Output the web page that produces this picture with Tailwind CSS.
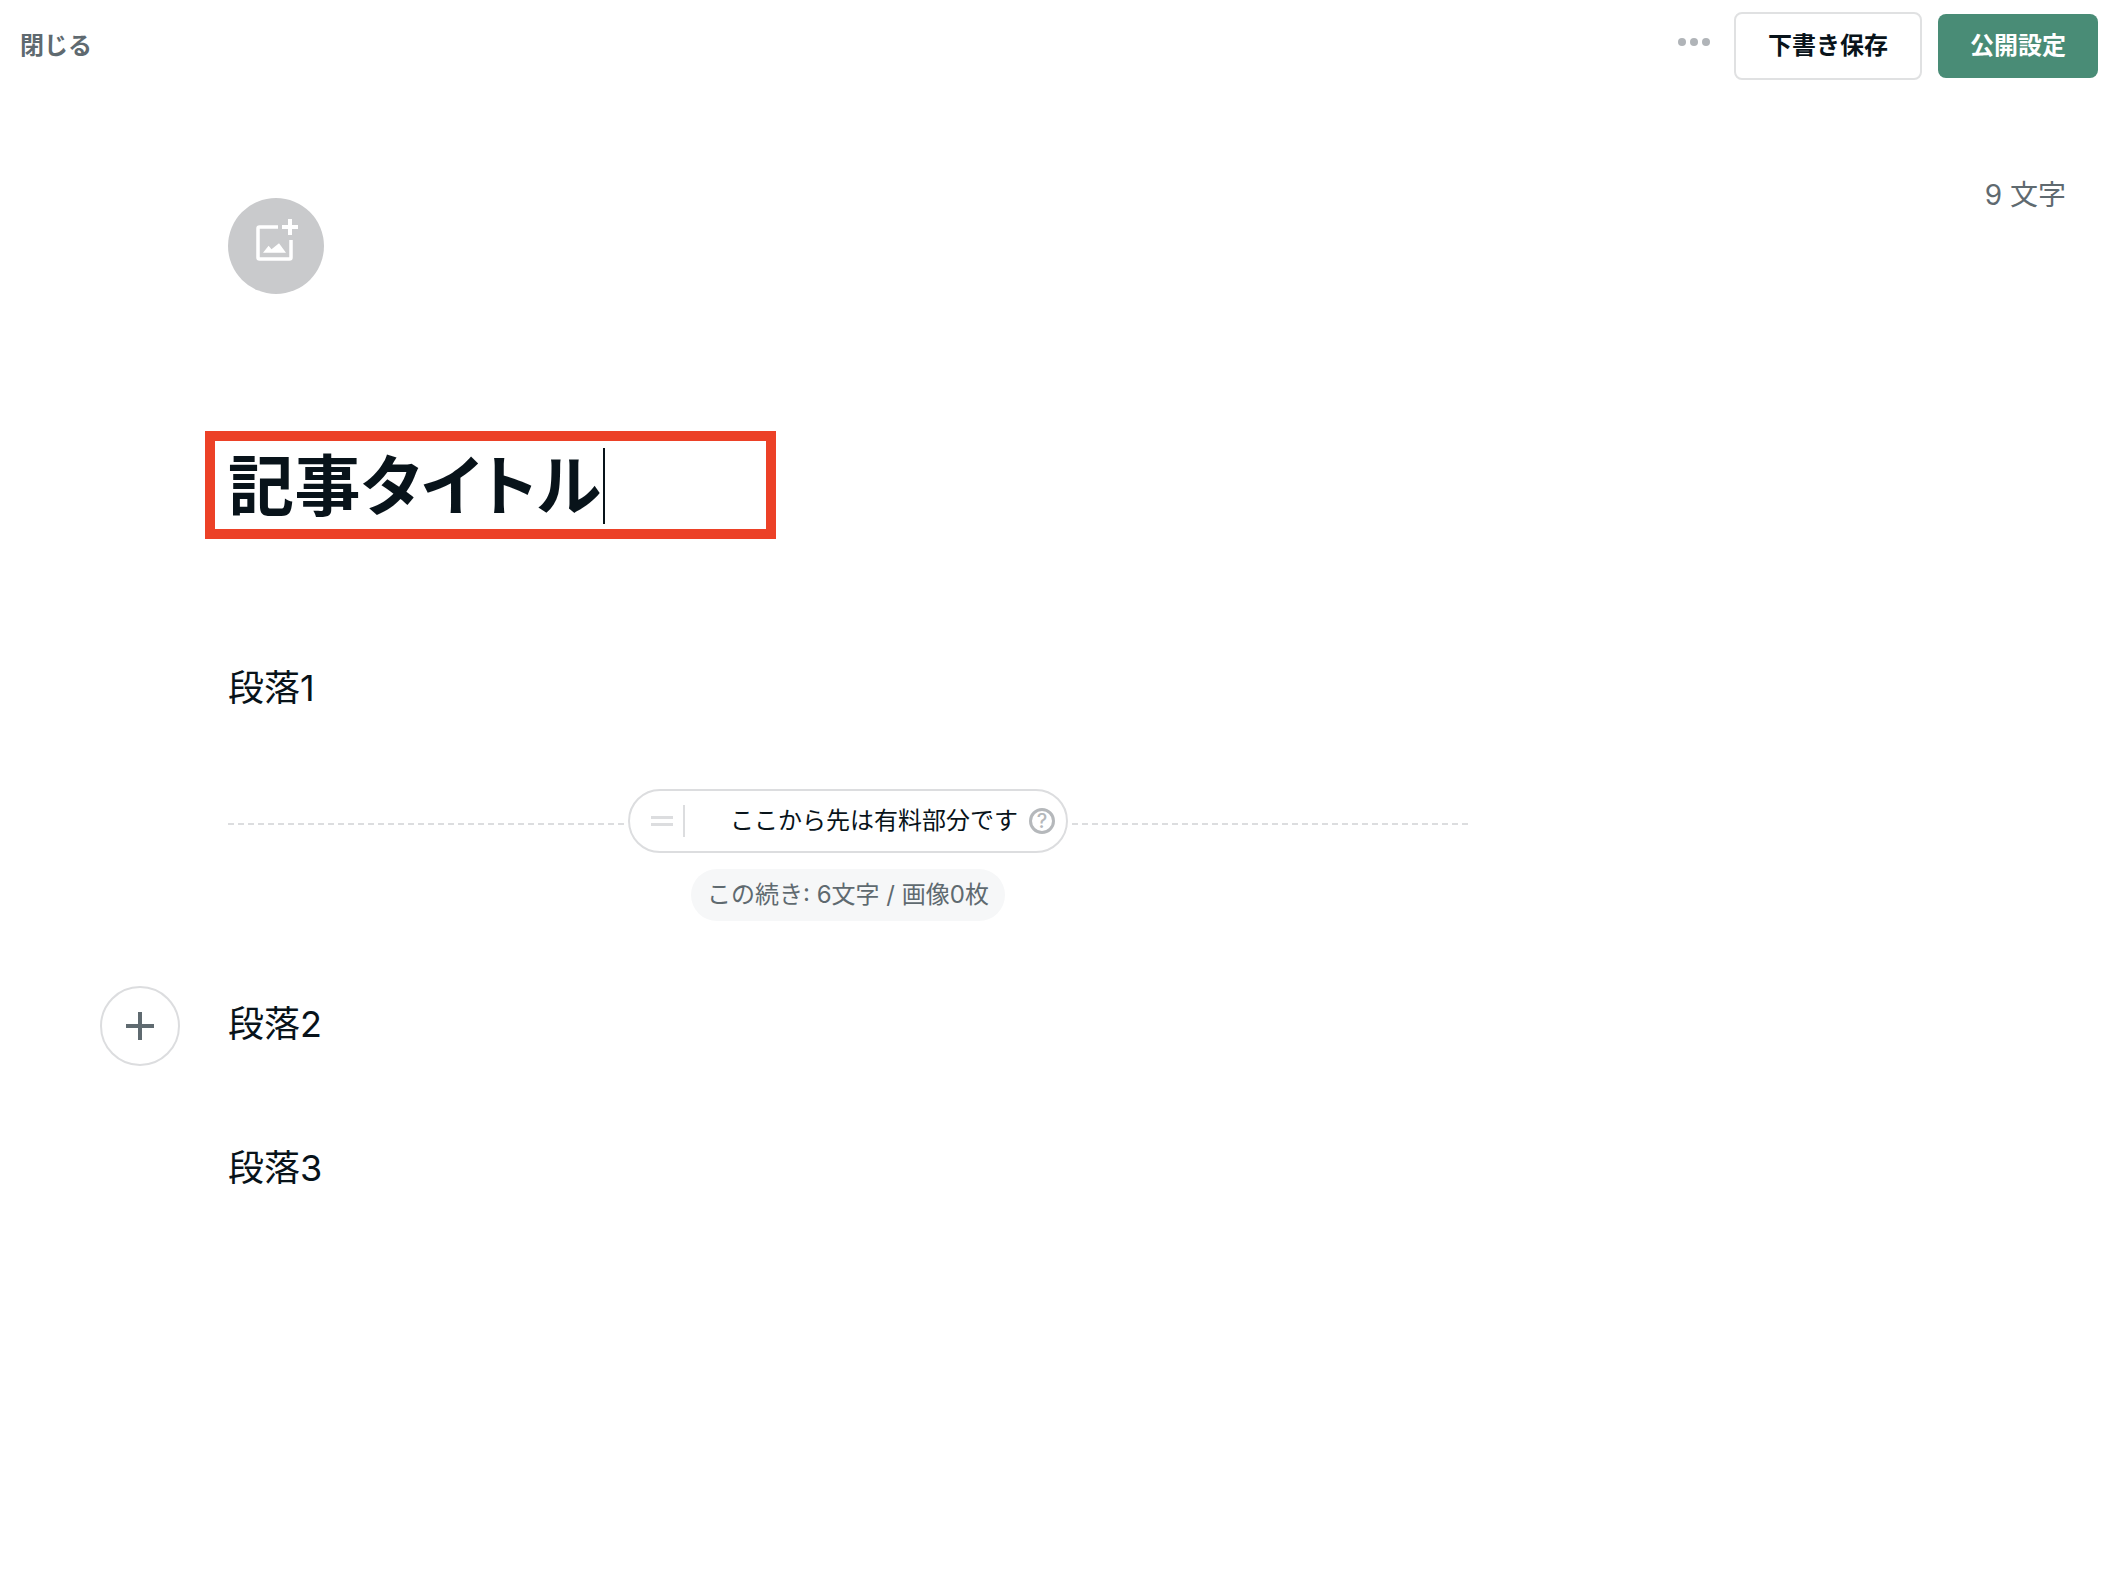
<!DOCTYPE html>
<html lang="ja">
<head>
<meta charset="utf-8">
<script src="https://cdn.jsdelivr.net/npm/@tailwindcss/browser@4"></script>
</head>
<body class="bg-white">
<div class="relative w-[2112px] h-[1576px] overflow-hidden bg-white text-[#08131a] font-['Inter','Noto_Sans_CJK_JP',sans-serif]">
  <header class="flex items-center h-[92px] pl-[20px] pr-[14px]">
    <span class="text-[24px] font-bold text-[#5f6a70]">閉じる</span>
    <div class="ml-auto flex items-center">
      <div class="flex gap-[4px] mr-[24px] mb-[8px]">
        <span class="w-[8px] h-[8px] rounded-full bg-[#b0b4b8]"></span>
        <span class="w-[8px] h-[8px] rounded-full bg-[#b0b4b8]"></span>
        <span class="w-[8px] h-[8px] rounded-full bg-[#b0b4b8]"></span>
      </div>
      <button class="w-[188px] h-[68px] rounded-[8px] border-2 border-[#e0e1e2] bg-white text-[24px] font-bold text-[#08131a]">下書き保存</button>
      <button class="ml-[16px] w-[160px] h-[64px] rounded-[8px] bg-[#498c76] text-[24px] font-bold text-white">公開設定</button>
    </div>
  </header>

  <div class="flex justify-end pr-[46px] pt-[82px] h-[82px]">
    <span class="text-[28px] leading-[42px] text-[#5f6a70] h-[42px] whitespace-nowrap">9 文字</span>
  </div>

  <main class="pl-[228px] w-[1468px]">
    <div class="pt-[24px]">
      <div class="flex items-center justify-center w-[96px] h-[96px] rounded-full bg-[#c9cacc]">
        <svg class="ml-[2px] mb-[12px]" width="42" height="42" viewBox="0 0 42 42" fill="none">
          <path d="M22 8H3.500A1.500 1.500 0 0 0 2 9.500V38.500A1.500 1.500 0 0 0 3.500 40H33.500A1.500 1.500 0 0 0 35 38.500V21" stroke="#fff" stroke-width="3.500"/>
          <path d="M34 0V16M26 8H42" stroke="#fff" stroke-width="4"/>
          <path d="M7 33.700L12.600 26.700L15.500 30.300L23 24.300L30 33.700Z" fill="#fff"/>
        </svg>
      </div>
    </div>

    <h1 class="mt-[154px] h-[76px] flex items-center text-[66px] leading-[76px] font-bold whitespace-nowrap tracking-[0.4px] [font-feature-settings:'palt']">記事タイトル<span class="w-[2px] h-[76px] bg-[#08131a] ml-[1px]"></span></h1>

    <p class="mt-[139px] h-[50px] leading-[50px] text-[36px]">段落1</p>

    <div class="mt-[76px] relative">
      <div class="flex items-center h-[64px]">
        <div class="flex-1 border-t-2 border-dashed border-[#dcdddf] mt-[6px]"></div>
        <div class="mx-[4px] w-[440px] h-[64px] rounded-full border-2 border-[#dcdddf] flex items-center bg-white">
          <div class="ml-[21px] w-[22px] h-[10px] border-y-[3px] border-[#dcdddf]"></div>
          <div class="ml-[10px] w-[2px] h-[32px] bg-[#dcdddf]"></div>
          <span class="ml-[45px] text-[24px] whitespace-nowrap">ここから先は有料部分です</span>
          <span class="ml-[11px] w-[26px] h-[26px] rounded-full border-[3px] border-[#b5b8bb] flex items-center justify-center text-[20px] font-medium text-[#b5b8bb]">?</span>
        </div>
        <div class="flex-1 border-t-2 border-dashed border-[#dcdddf] mt-[6px]"></div>
      </div>
      <div class="flex justify-center mt-[16px]">
        <span class="h-[52px] w-[314px] rounded-full bg-[#f6f7f8] flex items-center justify-center text-[24px] text-[#5f6a70] whitespace-nowrap">この続き: 6文字 / 画像0枚</span>
      </div>
    </div>

    <div class="relative mt-[78px]">
      <p class="h-[50px] leading-[50px] text-[36px]">段落2</p>
      <button class="absolute left-[-128px] top-[-13px] w-[80px] h-[80px] rounded-full border-2 border-[#dcdddf] flex items-center justify-center">
        <svg width="28" height="28" viewBox="0 0 28 28" fill="none"><path d="M14 0V28M0 14H28" stroke="#5f6a70" stroke-width="4"/></svg>
      </button>
    </div>

    <p class="mt-[94px] h-[50px] leading-[50px] text-[36px]">段落3</p>
  </main>

  <div class="absolute left-[205px] top-[431px] w-[571px] h-[108px] border-[10px] border-[#ec4127]"></div>
</div>
</body>
</html>
